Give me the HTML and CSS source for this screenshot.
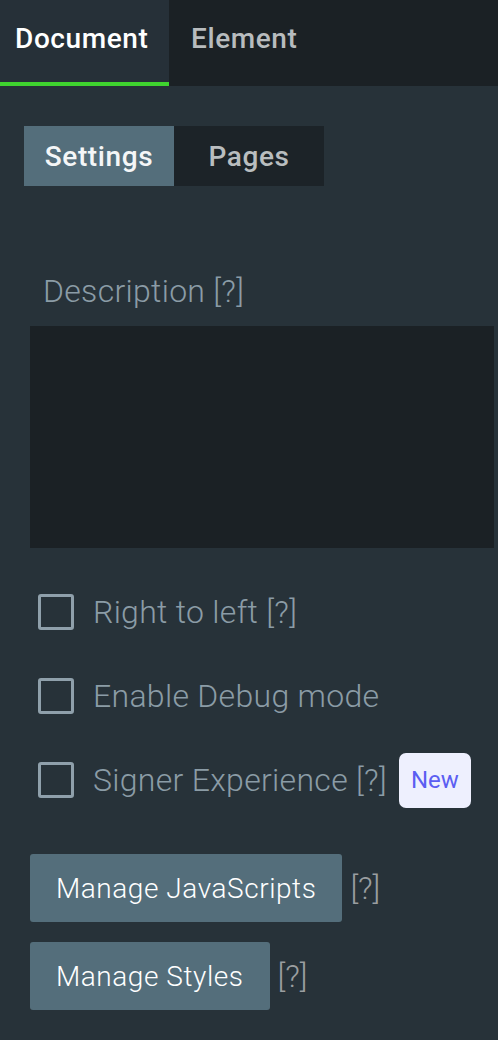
FILE: index.html
```html
<!DOCTYPE html>
<html lang="en">
<head>
    <meta charset="UTF-8">
    <title>Document settings</title>
    <link rel="stylesheet" href="styles.css">
</head>
<body>
    <div class="tabs">
        <div class="tab active">Document</div>
        <div class="tab">Element</div>
    </div>

    <div class="panel">
        <div class="subtabs">
            <div class="subtab active">Settings</div>
            <div class="subtab">Pages</div>
        </div>

        <label class="field-label">Description [?]</label>
        <textarea class="description"></textarea>

        <div class="checks">
            <div class="check-row">
                <span class="checkbox"></span>
                <span class="check-label">Right to left [?]</span>
            </div>
            <div class="check-row">
                <span class="checkbox"></span>
                <span class="check-label">Enable Debug mode</span>
            </div>
            <div class="check-row">
                <span class="checkbox"></span>
                <span class="check-label">Signer Experience [?]</span>
                <span class="badge">New</span>
            </div>
        </div>

        <div class="manage-row">
            <button class="button">Manage JavaScripts</button>
            <span class="help">[?]</span>
        </div>
        <div class="manage-row">
            <button class="button">Manage Styles</button>
            <span class="help">[?]</span>
        </div>
    </div>
</body>
</html>
```

FILE: styles.css
```css
body {
    margin: 0;
    background: #273239;
    font-family: Roboto, "Noto Sans", sans-serif;
    height: 1040px;
    overflow: hidden;
}

.tabs {
    display: flex;
    height: 86px;
    background: #1b2125;
}

.tab {
    box-sizing: border-box;
    height: 86px;
    padding: 22px 0 0 22px;
    font-size: 28px;
    font-weight: 500;
    letter-spacing: 0.6px;
    color: #b8bcbe;
}

.tab.active {
    width: 169px;
    padding-left: 15px;
    background: #263038;
    color: #ffffff;
    border-bottom: 4px solid #3fd42f;
}

.panel {
    padding: 40px 0 0 0;
}

.subtabs {
    display: flex;
    margin-left: 24px;
}

.subtab {
    width: 150px;
    height: 60px;
    line-height: 62px;
    text-align: center;
    font-size: 28px;
    font-weight: 500;
    letter-spacing: 0.6px;
    background: #1c2328;
    color: #b9bdbf;
}

.subtab.active {
    background: #546e7b;
    color: #f4f6f7;
}

.field-label {
    display: block;
    margin: 86px 0 0 43px;
    height: 54px;
    font-size: 32px;
    font-weight: 300;
    letter-spacing: 0.3px;
    color: #8b9ca6;
}

.description {
    display: block;
    box-sizing: border-box;
    width: 464px;
    height: 222px;
    margin: 0 0 0 30px;
    background: #1b2125;
    border: none;
    resize: none;
}

.checks {
    display: flex;
    flex-direction: column;
    gap: 48px;
    margin: 46px 0 0 38px;
}

.check-row {
    display: flex;
    align-items: center;
    height: 36px;
}

.checkbox {
    box-sizing: border-box;
    width: 36px;
    height: 36px;
    border: 3px solid #8fa0ab;
    border-radius: 3px;
}

.check-label {
    margin-left: 19px;
    font-size: 32px;
    font-weight: 300;
    letter-spacing: 0.3px;
    color: #8b9ca6;
}

.badge {
    margin-left: 12px;
    width: 72px;
    height: 55px;
    line-height: 55px;
    text-align: center;
    border-radius: 7px;
    background: #eef0fe;
    color: #5b5ef2;
    font-size: 24px;
}

.manage-row {
    display: flex;
    align-items: center;
    margin: 56px 0 0 30px;
}

.manage-row + .manage-row {
    margin-top: 20px;
}

.button {
    height: 68px;
    padding: 0 26px;
    border: none;
    border-radius: 3px;
    background: #546e7b;
    color: #ffffff;
    font-family: Roboto, "Noto Sans", sans-serif;
    font-size: 28px;
    font-weight: 300;
    letter-spacing: 0.55px;
}

.help {
    margin-left: 8px;
    font-size: 32px;
    font-weight: 300;
    color: #9a9ea0;
}
```
